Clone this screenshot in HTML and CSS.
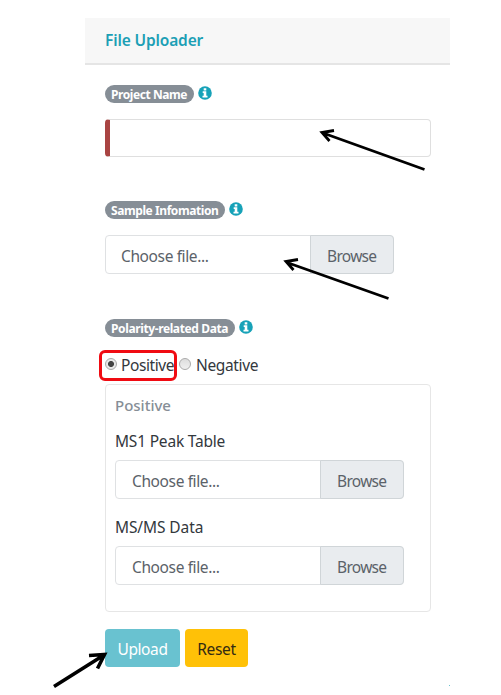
FILE: index.html
```html
<!DOCTYPE html>
<html lang="en">
<head>
<meta charset="utf-8">
<title>File Uploader</title>
<link rel="stylesheet" href="styles.css">
</head>
<body>
<svg class="defs" width="0" height="0" aria-hidden="true">
  <symbol id="info" viewBox="0 0 14 14">
    <circle cx="7" cy="7" r="6.8" fill="#17a2b8"/>
    <path d="M5.700 2.200h2.600v2.200H5.700zM4.700 5.300h3.600v4.500h1.200v1.800H4.500V9.800h1.200V7.100h-1z" fill="#fff"/>
  </symbol>
</svg>
<main class="card">
  <header class="card-header">File Uploader</header>
  <form class="card-body">
    <section class="group project">
      <div class="heading"><span class="badge">Project Name</span><svg class="info"><use href="#info"/></svg></div>
      <input class="text-input" type="text" aria-label="Project Name">
    </section>
    <section class="group sample">
      <div class="heading"><span class="badge badge-sample">Sample Infomation</span><svg class="info"><use href="#info"/></svg></div>
      <div class="file"><span class="file-name">Choose file...</span><span class="browse">Browse</span></div>
    </section>
    <section class="group polarity">
      <div class="heading"><span class="badge badge-polarity">Polarity-related Data</span><svg class="info"><use href="#info"/></svg></div>
      <div class="radios">
        <span class="radio checked"></span><span class="option positive">Positive</span>
        <span class="radio"></span><span class="option negative">Negative</span>
        <span class="highlight"></span>
      </div>
      <div class="panel">
        <div class="panel-title">Positive</div>
        <div class="label label-peak">MS1 Peak Table</div>
        <div class="file"><span class="file-name">Choose file...</span><span class="browse">Browse</span></div>
        <div class="label label-msms">MS/MS Data</div>
        <div class="file"><span class="file-name">Choose file...</span><span class="browse">Browse</span></div>
      </div>
    </section>
    <div class="actions">
      <button class="btn upload" type="button">Upload</button>
      <button class="btn reset" type="button">Reset</button>
    </div>
  </form>
</main>
<svg class="arrows" viewBox="0 0 501 695" fill="none" stroke="#000">
  <g stroke-width="2.800">
    <path d="M424.500 169.500L323 133M334 130.500L322 132.500L329.500 141"/>
    <path d="M388.500 298.500L287 262.500M298 259.500L286 261.500L293.500 270"/>
  </g>
  <path stroke-width="3.600" d="M54 686.500L104 655M89 655.500L104.500 654.500L97.500 668.500"/>
  <path stroke="#6cc3d0" stroke-width="1" d="M449 685.500h1"/>
</svg>
</body>
</html>
```

FILE: styles.css
```css
* { box-sizing: border-box; }
body {
  margin: 0;
  width: 501px;
  height: 695px;
  overflow: hidden;
  background: #fff;
  color: #33383d;
  font: 15.5px/24px "Noto Sans", "Open Sans", sans-serif;
  white-space: nowrap;
}
.defs { position: absolute; }
.card { width: 365px; margin: 18px 0 0 85px; }
.card-header {
  height: 47px;
  padding: 0 20px;
  border-bottom: 2px solid #e5e5e5;
  background: #f7f7f7;
  color: #1c9fb5;
  font-size: 15.5px;
  font-weight: 600;
  line-height: 45px;
  letter-spacing: -.14px;
}
.card-body { padding: 20px 20px 0; }
.heading { display: flex; align-items: flex-start; height: 34px; }
.badge {
  width: 89px;
  height: 18px;
  padding-left: 6px;
  border-radius: 9px;
  background: #868e96;
  color: #fff;
  font-size: 12px;
  font-weight: 700;
  line-height: 19px;
  letter-spacing: -.42px;
}
.badge-sample { width: 120px; }
.badge-polarity { width: 130px; letter-spacing: -.38px; }
.info { width: 14px; height: 14px; margin: 1px 0 0 4px; }
.text-input {
  display: block;
  width: 326px;
  height: 38px;
  border: 1px solid #dfdfdf;
  border-left: 5px solid #a94442;
  border-radius: 4px;
  background: #fff;
  outline: 0;
}
.project { height: 116px; }
.sample { height: 118px; }
.file {
  display: flex;
  width: 289px;
  height: 39px;
  border: 1px solid #dfe1e3;
  border-radius: 4px;
  color: #5b6269;
  line-height: 40px;
}
.file-name { flex: 1; padding-left: 15px; letter-spacing: -.38px; }
.panel .file-name { padding-left: 16px; }
.browse {
  width: 84px;
  margin: -1px;
  padding-left: 16px;
  border: 1px solid #d0d5d8;
  border-radius: 0 4px 4px 0;
  background: #e9ecef;
  letter-spacing: -.7px;
}
.radios { position: relative; display: flex; align-items: center; height: 31px; }
.radio {
  width: 12px;
  height: 12px;
  margin-top: -9px;
  border: 1px solid #aaa;
  border-radius: 50%;
  background: linear-gradient(#ddd, #f0f0f0);
}
.checked { background: radial-gradient(circle, #444 0 2.6px, #e8e8e8 3.4px); }
.option { margin: -7px 0 0 4px; letter-spacing: -.4px; }
.positive { width: 58px; }
.negative { margin-left: 5px; letter-spacing: -.35px; }
.highlight {
  position: absolute;
  left: -6px;
  top: -3px;
  width: 78px;
  height: 31px;
  border: 3px solid #f00b12;
  border-radius: 6px;
}
.panel {
  width: 326px;
  height: 228px;
  padding: 8px 9px;
  border: 1px solid #e6e6e6;
  border-radius: 4px;
}
.panel-title { height: 36px; color: #868e96; font-size: 15px; font-weight: 500; }
.label { height: 31px; letter-spacing: -.2px; }
.label-msms { letter-spacing: -.1px; }
.file + .label { margin-top: 16px; }
.actions { display: flex; gap: 5px; margin-top: 17px; }
.btn {
  height: 38px;
  padding: 1px 0 0;
  border: 0;
  border-radius: 4px;
  font: inherit;
}
.upload { width: 75px; background: #69c2d0; color: #fff; letter-spacing: -.4px; }
.reset { width: 63px; background: #ffc107; color: #332b12; letter-spacing: -.35px; }
.arrows { position: absolute; left: 0; top: 0; width: 501px; height: 695px; pointer-events: none; }
```
